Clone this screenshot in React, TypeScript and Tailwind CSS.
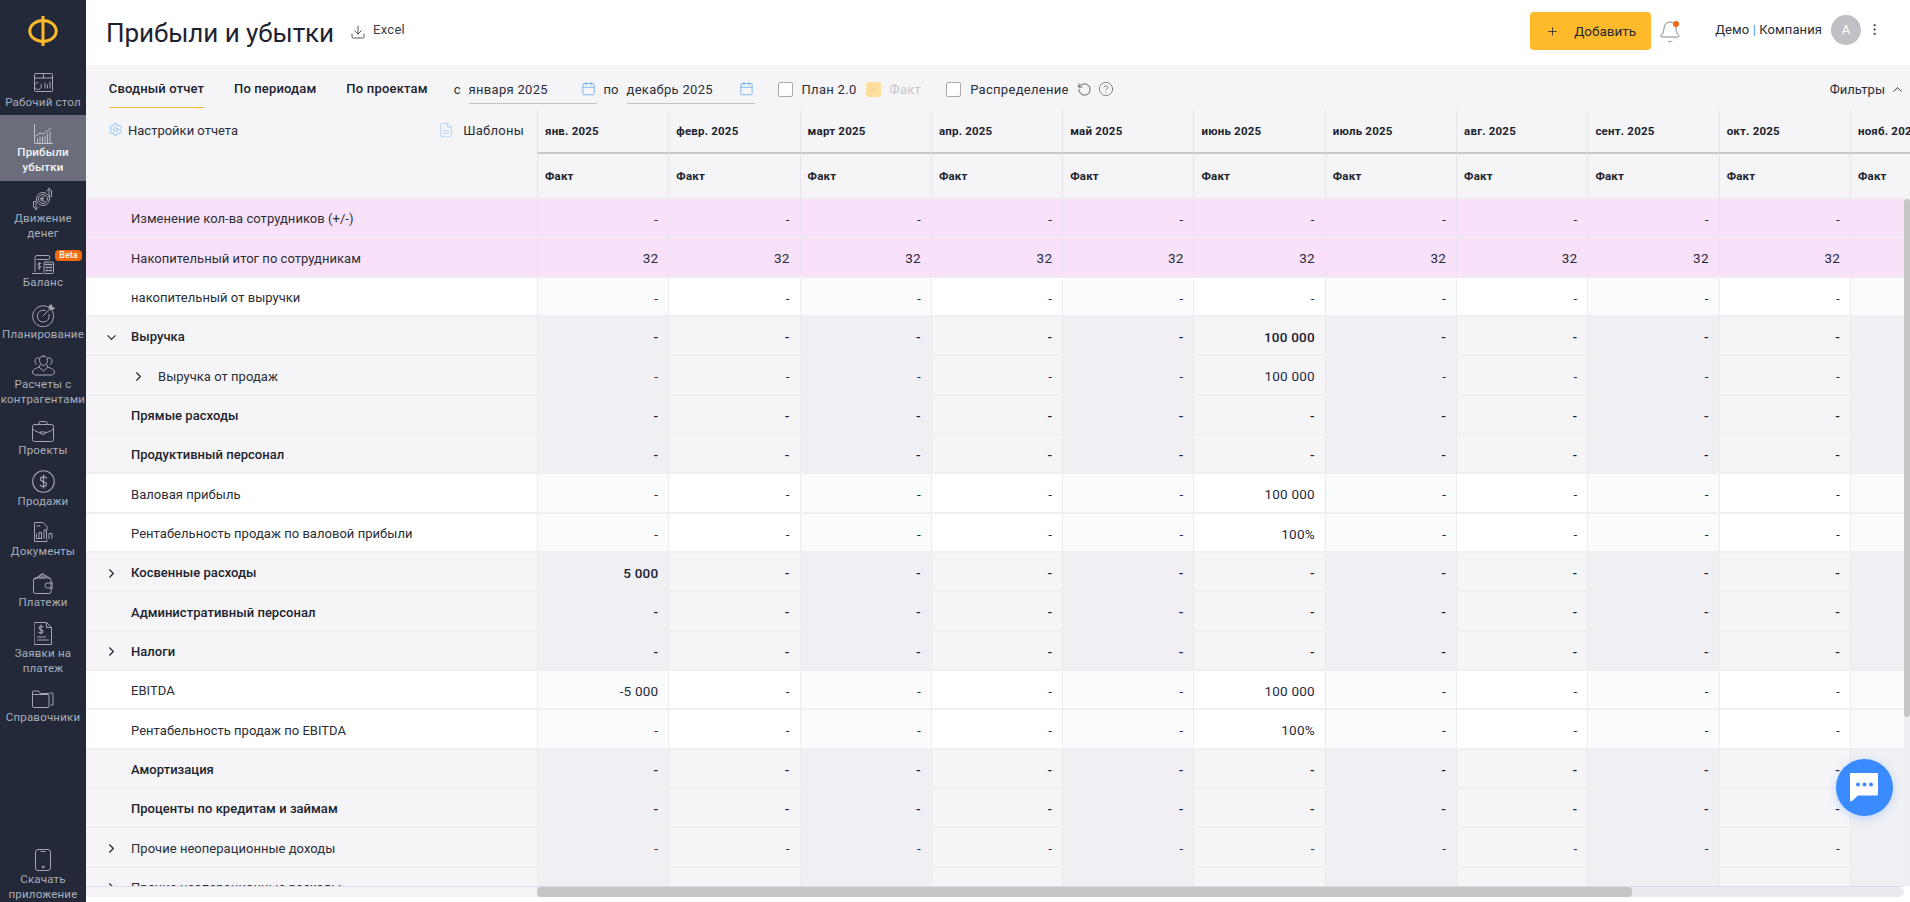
import React from "react";
import { Bell, Calendar, Check, ChevronDown, ChevronRight, ChevronUp, CircleHelp, Download, FileText, MoreVertical, Plus, RotateCcw, Settings } from "lucide-react";

const s = { fill: "none", stroke: "currentColor", strokeWidth: 1, strokeLinecap: "round" as const, strokeLinejoin: "round" as const };

const IDesk = () => (
  <svg width="19" height="19" viewBox="0 0 19 19" {...s}>
    <rect x="0.5" y="0.5" width="18" height="18" rx="1" />
    <path d="M0.5 5h18M9.5 0.5V5" />
    <path d="M4 9.5a3.5 3.5 0 1 0 3 1.8" />
    <path d="M11 10v5M13.5 12v3M16 9v6" />
  </svg>
);
const IChart = () => (
  <svg width="19" height="20" viewBox="0 0 19 20" {...s}>
    <path d="M0.5 0.5v19h18" />
    <path d="M2 12l4-3 4 1 7-6" />
    <path d="M3.5 19v-4M6 19v-6M8.5 19v-6M11 19v-7M13.5 19v-9M16 19v-11" />
  </svg>
);
const IMoney = () => (
  <svg width="22" height="24" viewBox="0 0 22 24" {...s}>
    <circle cx="11" cy="12" r="6.5" />
    <circle cx="11" cy="12" r="4.5" />
    <path d="M12.5 9.8c-2-1-3 .5-3 2.200s1 3.200 3 2.200M8.500 11.500h3M8.500 13h3" />
    <path d="M17 9V1.500M17 1.500l-2 2.500M17 1.500l2.500 2.500M19.500 4v5.500h-2" />
    <path d="M4 15v7.500M4 22.500l-2-2.500M4 22.500l2.500-2.500M1.500 20v-5.500h2" />
  </svg>
);
const IBalance = () => (
  <svg width="22" height="19" viewBox="0 0 22 19" {...s}>
    <path d="M3 16.500V2.500a2 2 0 0 1 2-2h11a2 2 0 0 1 0 4H5" />
    <path d="M0.500 18.500h10" />
    <rect x="12" y="7" width="9.500" height="11.500" rx="1" />
    <path d="M13.500 9.500h6.500M14 12.500h2M17.500 12.500h2M14 15.500h2M17.500 15.500h2" strokeWidth="1.500" />
    <path d="M8.800 8.500c-1.500-.8-3-.2-3 1s3 1 3 2.200-1.500 1.800-3 1M7.300 7.500v7" />
  </svg>
);
const ITarget = () => (
  <svg width="23" height="23" viewBox="0 0 23 23" {...s}>
    <path d="M16.500 3.200a10.500 10.500 0 1 0 4 4.300" />
    <path d="M13.500 6.500a6 6 0 1 0 3.500 3.800" />
    <path d="M11 12L20 3" />
    <path d="M17 2.500l.5 3 3 .5 2-2-2.500-.5-.5-2.500z" fill="currentColor" />
  </svg>
);
const IPeople = () => (
  <svg width="23" height="21" viewBox="0 0 23 21" {...s}>
    <path d="M11.500 1c-3 0-4.200 2.200-4 4.500.2 2.500 1.800 5 4 5s3.800-2.500 4-5c.2-2.300-1-4.500-4-4.500z" />
    <path d="M8 10l-.5 2-4 1.500c-1.500.8-3 1.800-3 3.500 0 1.500 1 3 3.500 3h15c2.500 0 3.500-1.500 3.500-3 0-1.700-1.500-2.700-3-3.500l-4-1.500-.5-2" />
    <path d="M7.500 12.500l4 3.500 4-3.500" />
    <path d="M7 3c-2-.8-4 .5-4 3 0 1.500.8 3 1.800 3.800M16 3c2-.8 4 .5 4 3 0 1.500-.8 3-1.800 3.800" />
  </svg>
);
const ICase = () => (
  <svg width="22" height="21" viewBox="0 0 22 21" {...s}>
    <rect x="0.500" y="3.500" width="21" height="17" rx="2" />
    <path d="M7 3.500V2a1.500 1.500 0 0 1 1.500-1.500h5A1.500 1.500 0 0 1 15 2v1.500" />
    <path d="M0.500 8c3 2.500 6.500 3.500 8 3.800M21.500 8c-3 2.500-6.500 3.500-8 3.800" />
    <path d="M8.500 11h5v1.500l-2.500 1-2.500-1z" />
  </svg>
);
const ISales = () => (
  <svg width="23" height="23" viewBox="0 0 23 23" {...s}>
    <circle cx="11.500" cy="11.500" r="10.800" strokeWidth="1.100" />
    <path d="M14.500 8c-.8-1.500-6-1.800-6 1.200 0 3.200 6 1.800 6 5 0 3-5.500 2.500-6.200 1M11.500 5v13" strokeWidth="1.200" />
  </svg>
);
const IDocs = () => (
  <svg width="19" height="20" viewBox="0 0 19 20" {...s}>
    <path d="M13 18v1.500H0.500V0.500H9l4 4v3" />
    <path d="M3 4h3" />
    <path d="M3 16.500h4M5 16.500v-6h2.500v6M10 16.500V8h2.500v8.500M15 16.500v-5h3v5M2.500 12v4.500" />
  </svg>
);
const IWallet = () => (
  <svg width="20" height="21" viewBox="0 0 20 21" {...s}>
    <rect x="0.500" y="5" width="17.500" height="15.500" rx="2" />
    <path d="M0.500 7l9-6.500 7 4.500" />
    <path d="M4 5l5.500-3.500M7 5l4-2.500M10 5l2.500-1.500" />
    <path d="M19.500 10h-5a2.300 2.300 0 0 0 0 5h5z" />
  </svg>
);
const IRequest = () => (
  <svg width="18" height="23" viewBox="0 0 18 23" {...s}>
    <path d="M0.500 0.500h12l5 5v17H0.500z" />
    <path d="M12.500 0.500v5h5" />
    <path d="M9 5c-.8-1-4-1.200-4 1 0 2.400 4 1.200 4 3.400 0 2-3.400 1.800-4.200.8M7 3v9" strokeWidth="1.100" />
    <path d="M3.500 15h8M3.500 18h11" />
  </svg>
);
const IFolder = () => (
  <svg width="22" height="18" viewBox="0 0 22 18" {...s}>
    <path d="M0.500 16.500V5.500a1 1 0 0 1 1-1h14.500a1 1 0 0 1 1 1v11a1 1 0 0 1-1 1H1.500a1 1 0 0 1-1-1z" />
    <path d="M0.500 5V2a1 1 0 0 1 1-1h5l2 2.500h8" />
    <path d="M19 15h2V4a1 1 0 0 0-1-1h-2" />
  </svg>
);
const IPhone = () => (
  <svg width="16" height="22" viewBox="0 0 16 22" {...s}>
    <rect x="0.500" y="0.500" width="15" height="21" rx="2.500" />
    <path d="M6 2.500h4" />
    <circle cx="8" cy="18" r="1" />
  </svg>
);

function SideItem({ cls, icon, lines, active, badge, gap = "mt-[1px]" }: { cls: string; icon: React.ReactNode; lines: string[]; active?: boolean; badge?: boolean; gap?: string }) {
  return (
    <div className={`relative flex flex-col items-center ${cls} ${active ? "bg-[#6b6e7a] text-[#f2f5f9] font-medium" : "text-[#a8aebc]"}`}>
      <div className={active ? "text-[#c0c3ca]" : "text-[#a3a7b1]"}>{icon}</div>
      <div className={`${gap} text-center text-[11.5px] leading-[15px] tracking-[0.2px] whitespace-nowrap`}>
        {lines.map((l) => (
          <div key={l}>{l}</div>
        ))}
      </div>
      {badge && (
        <span className="absolute left-[55px] top-[6px] h-[11px] w-[27px] rounded-[4px] bg-[#f26a12] text-center text-[9px] font-semibold leading-[11px] text-[#fff3e4]">Beta</span>
      )}
    </div>
  );
}

const months = ["янв. 2025", "февр. 2025", "март 2025", "апр. 2025", "май 2025", "июнь 2025", "июль 2025", "авг. 2025", "сент. 2025", "окт. 2025", "нояб. 2025"];

type Row = {
  label: string;
  kind: "pink" | "white" | "gray";
  bold?: boolean;
  chevron?: "down" | "right";
  level?: boolean;
  fill?: string;
  values?: Record<number, string>;
};

const rows: Row[] = [
  { label: "Изменение кол-ва сотрудников (+/-)", kind: "pink" },
  { label: "Накопительный итог по сотрудникам", kind: "pink", fill: "32" },
  { label: "накопительный от выручки", kind: "white" },
  { label: "Выручка", kind: "gray", bold: true, chevron: "down", values: { 5: "100 000" } },
  { label: "Выручка от продаж", kind: "gray", chevron: "right", level: true, values: { 5: "100 000" } },
  { label: "Прямые расходы", kind: "gray", bold: true },
  { label: "Продуктивный персонал", kind: "gray", bold: true },
  { label: "Валовая прибыль", kind: "white", values: { 5: "100 000" } },
  { label: "Рентабельность продаж по валовой прибыли", kind: "white", values: { 5: "100%" } },
  { label: "Косвенные расходы", kind: "gray", bold: true, chevron: "right", values: { 0: "5 000" } },
  { label: "Административный персонал", kind: "gray", bold: true },
  { label: "Налоги", kind: "gray", bold: true, chevron: "right" },
  { label: "EBITDA", kind: "white", values: { 0: "-5 000", 5: "100 000" } },
  { label: "Рентабельность продаж по EBITDA", kind: "white", values: { 5: "100%" } },
  { label: "Амортизация", kind: "gray", bold: true },
  { label: "Проценты по кредитам и займам", kind: "gray", bold: true },
  { label: "Прочие неоперационные доходы", kind: "gray", chevron: "right" },
  { label: "Прочие неоперационные расходы", kind: "gray", chevron: "right" },
];

function cellBg(kind: Row["kind"], i: number) {
  if (kind === "pink") return "bg-[#f9e2f9] border-[#efe3f2]";
  if (kind === "white") return i % 2 === 0 ? "bg-[#fafbfb] border-[#ececef]" : "bg-white border-[#ececef]";
  return i % 2 === 0 ? "bg-[#f0f0f4] border-[#eaeaee]" : "bg-[#f5f5f8] border-[#eaeaee]";
}

function TableRow({ r }: { r: Row }) {
  const left = r.kind === "pink" ? "bg-[#f9e2f9]" : r.kind === "white" ? "bg-white" : "bg-[#f5f5f8]";
  const line = r.kind === "pink" ? "border-[#f1eaf2]" : "border-[#efeff2]";
  return (
    <div className={`grid h-[39.33px] grid-cols-[451px_repeat(11,131.3px)] border-b-2 ${line}`}>
      <div className={`flex items-center pt-[3px] text-[13px] tracking-[0.03px] text-[#2a2d36] ${left} ${r.level ? "pl-[45px]" : "pl-[18px]"} ${r.bold ? "font-medium text-[#20232c]" : ""}`}>
        <span className="flex w-[27px] shrink-0 items-center">
          {r.chevron === "down" && <ChevronDown size={15} strokeWidth={1.75} className="text-[#1c2233]" />}
          {r.chevron === "right" && <ChevronRight size={15} strokeWidth={1.75} className="text-[#1c2233]" />}
        </span>
        <span>{r.label}</span>
      </div>
      {months.map((_, i) => (
        <div key={i} className={`flex items-center justify-end border-l pr-[10px] pt-[3px] text-[13.5px] tracking-[0.2px] ${cellBg(r.kind, i)} ${r.bold ? "font-medium text-[#1a2030]" : "text-[#1f2a40]"}`}>
          {r.values?.[i] ?? r.fill ?? "-"}
        </div>
      ))}
    </div>
  );
}

export default function App() {
  return (
    <div className="relative flex h-[902px] w-[1910px] overflow-hidden bg-white [font-family:Roboto,sans-serif] text-[#2a2d36]">
      <aside className="flex h-[902px] w-[86px] shrink-0 flex-col bg-[#232938]">
        <div className="flex h-[66px] items-start justify-center pt-[16px]">
          <svg width="30" height="30" viewBox="0 0 30 30" fill="none" stroke="#ffb92a" strokeWidth="3">
            <ellipse cx="15" cy="15" rx="13.200" ry="10.500" />
            <path d="M15 0v30" />
          </svg>
        </div>
        <SideItem cls="h-[49px] pt-[7px]" icon={<IDesk />} lines={["Рабочий стол"]} gap="mt-[3px]" />
        <SideItem cls="h-[66px] pt-[9px]" icon={<IChart />} lines={["Прибыли", "убытки"]} active />
        <SideItem cls="h-[63px] pt-[6px]" icon={<IMoney />} lines={["Движение", "денег"]} gap="mt-[0px]" />
        <SideItem cls="h-[51px] pt-[11px]" icon={<IBalance />} lines={["Баланс"]} badge />
        <SideItem cls="h-[51px] pt-[9px]" icon={<ITarget />} lines={["Планирование"]} gap="mt-[0px]" />
        <SideItem cls="h-[64px] pt-[9px]" icon={<IPeople />} lines={["Расчеты с", "контрагентами"]} />
        <SideItem cls="h-[51px] pt-[11px]" icon={<ICase />} lines={["Проекты"]} />
        <SideItem cls="h-[51px] pt-[9px]" icon={<ISales />} lines={["Продажи"]} />
        <SideItem cls="h-[51px] pt-[10px]" icon={<IDocs />} lines={["Документы"]} gap="mt-[2px]" />
        <SideItem cls="h-[50px] pt-[10px]" icon={<IWallet />} lines={["Платежи"]} />
        <SideItem cls="h-[65px] pt-[9px]" icon={<IRequest />} lines={["Заявки на", "платеж"]} />
        <SideItem cls="h-[51px] pt-[12px]" icon={<IFolder />} lines={["Справочники"]} gap="mt-[2px]" />
        <SideItem cls="mt-auto h-[53px] " icon={<IPhone />} lines={["Скачать", "приложение"]} />
      </aside>

      <main className="flex min-w-0 flex-1 flex-col">
        <header className="flex h-[65px] shrink-0 items-center bg-white">
          <h1 className="ml-[20px] text-[26px] font-normal leading-[30px] tracking-[-0.07px] text-[#1e2230]">Прибыли и убытки</h1>
          <Download size={16} strokeWidth={1.2} className="ml-[16px] -mt-[2px] text-[#2a2d36]" />
          <span className="ml-[7px] -mt-[5px] text-[13px] tracking-[0.3px] text-[#3a3d46]">Excel</span>
          <button className="ml-auto -mt-[3px] flex h-[38px] w-[121px] items-center rounded-[4px] bg-[#ffba2c] text-[13.5px] text-[#262a36]">
            <Plus size={13} strokeWidth={1.5} className="ml-[16px]" />
            <span className="ml-[15px]">Добавить</span>
          </button>
          <div className="relative ml-[7px] -mt-[1px] h-[24px] w-[24px]">
            <Bell size={24} strokeWidth={0.9} className="text-[#77797f]" />
            <span className="absolute left-[15px] top-[1px] h-[6px] w-[6px] rounded-full bg-[#f26a12]" />
          </div>
          <span className="ml-[33px] -mt-[6px] text-[13px] tracking-[0.1px] text-[#2a2d36]">
            Демо <span className="text-[#4a90e2]">|</span> Компания
          </span>
          <div className="ml-[9px] -mt-[6px] flex h-[30px] w-[30px] items-center justify-center rounded-full bg-[#bfbfc4] text-[13px] text-white">А</div>
          <MoreVertical size={15} strokeWidth={1.5} className="ml-[6px] mr-[28px] -mt-[7px] text-[#2a2d36]" />
        </header>

        <div className="flex h-[44px] shrink-0 bg-[#f5f5f8] pl-[23px] text-[13px]">
          <div className="flex h-[43px] w-[95px] items-start justify-center whitespace-nowrap border-b border-[#ffb92a] pt-[14px] font-medium tracking-[0.15px] text-[#20232c]">Сводный отчет</div>
          <div className="ml-[30px] whitespace-nowrap pt-[14px] font-medium tracking-[0.15px] text-[#20232c]">По периодам</div>
          <div className="ml-[30px] whitespace-nowrap pt-[14px] font-medium tracking-[0.2px] text-[#20232c]">По проектам</div>
          <span className="ml-[26px] pt-[17px] leading-[15px]">с</span>
          <div className="relative ml-[8px] flex h-[39px] w-[128px] items-start border-b border-[#c2c2c7] pt-[17px] leading-[15px] tracking-[0.3px]">
            января 2025
            <Calendar size={15} strokeWidth={1.2} className="absolute right-[1px] top-[16px] text-[#5aa0ee]" />
          </div>
          <span className="ml-[7px] pt-[17px] leading-[15px]">по</span>
          <div className="relative ml-[8px] flex h-[39px] w-[128px] items-start border-b border-[#c2c2c7] pt-[17px] leading-[15px] tracking-[0.3px]">
            декабрь 2025
            <Calendar size={15} strokeWidth={1.2} className="absolute right-[1px] top-[16px] text-[#5aa0ee]" />
          </div>
          <div className="ml-[23px] mt-[17px] h-[15px] w-[15px] rounded-[2px] border-[1.5px] border-[#a8a8ad] bg-white" />
          <span className="ml-[9px] pt-[17px] leading-[15px] tracking-[0.3px]">План 2.0</span>
          <div className="ml-[9px] mt-[17px] flex h-[15px] w-[15px] items-center justify-center rounded-[2px] bg-[#ffdf9e]">
            <Check size={10} strokeWidth={1.5} className="text-[#b9b6a6]" />
          </div>
          <span className="ml-[9px] pt-[17px] leading-[15px] tracking-[0.3px] text-[#c6c6c8]">Факт</span>
          <div className="ml-[25px] mt-[17px] h-[15px] w-[15px] rounded-[2px] border-[1.5px] border-[#a8a8ad] bg-white" />
          <span className="ml-[9px] pt-[17px] leading-[15px] tracking-[0.3px]">Распределение</span>
          <RotateCcw size={15} strokeWidth={1.2} className="ml-[8px] mt-[17px] text-[#2a2d36]" />
          <CircleHelp size={16} strokeWidth={1} className="ml-[6px] mt-[16px] text-[#55585f]" />
          <div className="ml-auto flex items-start pt-[17px] leading-[15px]">
            Фильтры
            <ChevronUp size={15} strokeWidth={1.5} className="ml-[5px] mr-[5px]" />
          </div>
        </div>

        <div className="grid h-[90px] shrink-0 grid-cols-[451px_repeat(11,131.3px)] grid-rows-[45px_45px] overflow-hidden border-b border-[#ececef] bg-[#f5f5f8] pr-[6px]">
          <div className="row-span-2 flex items-start pl-[22px] pt-[12px] text-[13px]">
            <Settings size={15} strokeWidth={1} className="mt-[1px] text-[#5aa0ee]" />
            <span className="ml-[5px]">Настройки отчета</span>
            <FileText size={16} strokeWidth={1} className="ml-auto mt-[1px] text-[#9cc6f4]" />
            <span className="ml-[9px] mr-[13px] tracking-[0.25px]">Шаблоны</span>
          </div>
          {months.map((m) => (
            <div key={m} className="flex items-center whitespace-nowrap border-b-2 border-l border-b-[#c9c9cd] border-l-[#e6e6ea] pl-[7px] pt-[2px] text-[11.5px] font-bold tracking-[0.2px] text-[#20232c]">
              {m}
            </div>
          ))}
          {months.map((m) => (
            <div key={m} className="flex items-center border-l border-[#e6e6ea] pl-[7px] text-[11.5px] font-bold tracking-[0.2px] text-[#20232c]">
              Факт
            </div>
          ))}
        </div>

        <div className="flex min-h-0 flex-1">
          <div className="min-w-0 flex-1 overflow-hidden">
            {rows.map((r) => (
              <TableRow key={r.label} r={r} />
            ))}
          </div>
          <div className="w-[6px] shrink-0 bg-[#eeeef2]">
            <div className="h-[518px] rounded-t-[3px] rounded-b-[3px] bg-[#c6c6c6]" />
          </div>
        </div>

        <div className="h-[16px] shrink-0 bg-white pr-[6px]">
          <div className="flex h-[11px] border-t border-[#dcdce8]">
            <div className="w-[451px] bg-[#f5f5f8]" />
            <div className="flex-1 rounded-r-[6px] bg-[#eaebf0]">
              <div className="h-full w-[1095px] rounded-[4px] bg-[#c6c6c6]" />
            </div>
          </div>
        </div>
      </main>

      <div className="absolute left-[1835.5px] top-[758.5px] flex h-[57px] w-[57px] items-center justify-center rounded-full bg-[#3a8bff] shadow-[0_2px_8px_rgba(58,139,255,0.3)]">
        <svg width="30" height="30" viewBox="0 0 30 30">
          <path d="M2 1h26a1.500 1.500 0 0 1 1 1v20a1.500 1.500 0 0 1-1.500 1.500H9l-6.500 6a1.300 1.300 0 0 1-1.500-1V2a1 1 0 0 1 1-1z" fill="#fff" />
          <circle cx="9" cy="12.500" r="2" fill="#3a8bff" />
          <circle cx="15.500" cy="12.500" r="2" fill="#3a8bff" />
          <circle cx="22" cy="12.500" r="2" fill="#3a8bff" />
        </svg>
      </div>
    </div>
  );
}
